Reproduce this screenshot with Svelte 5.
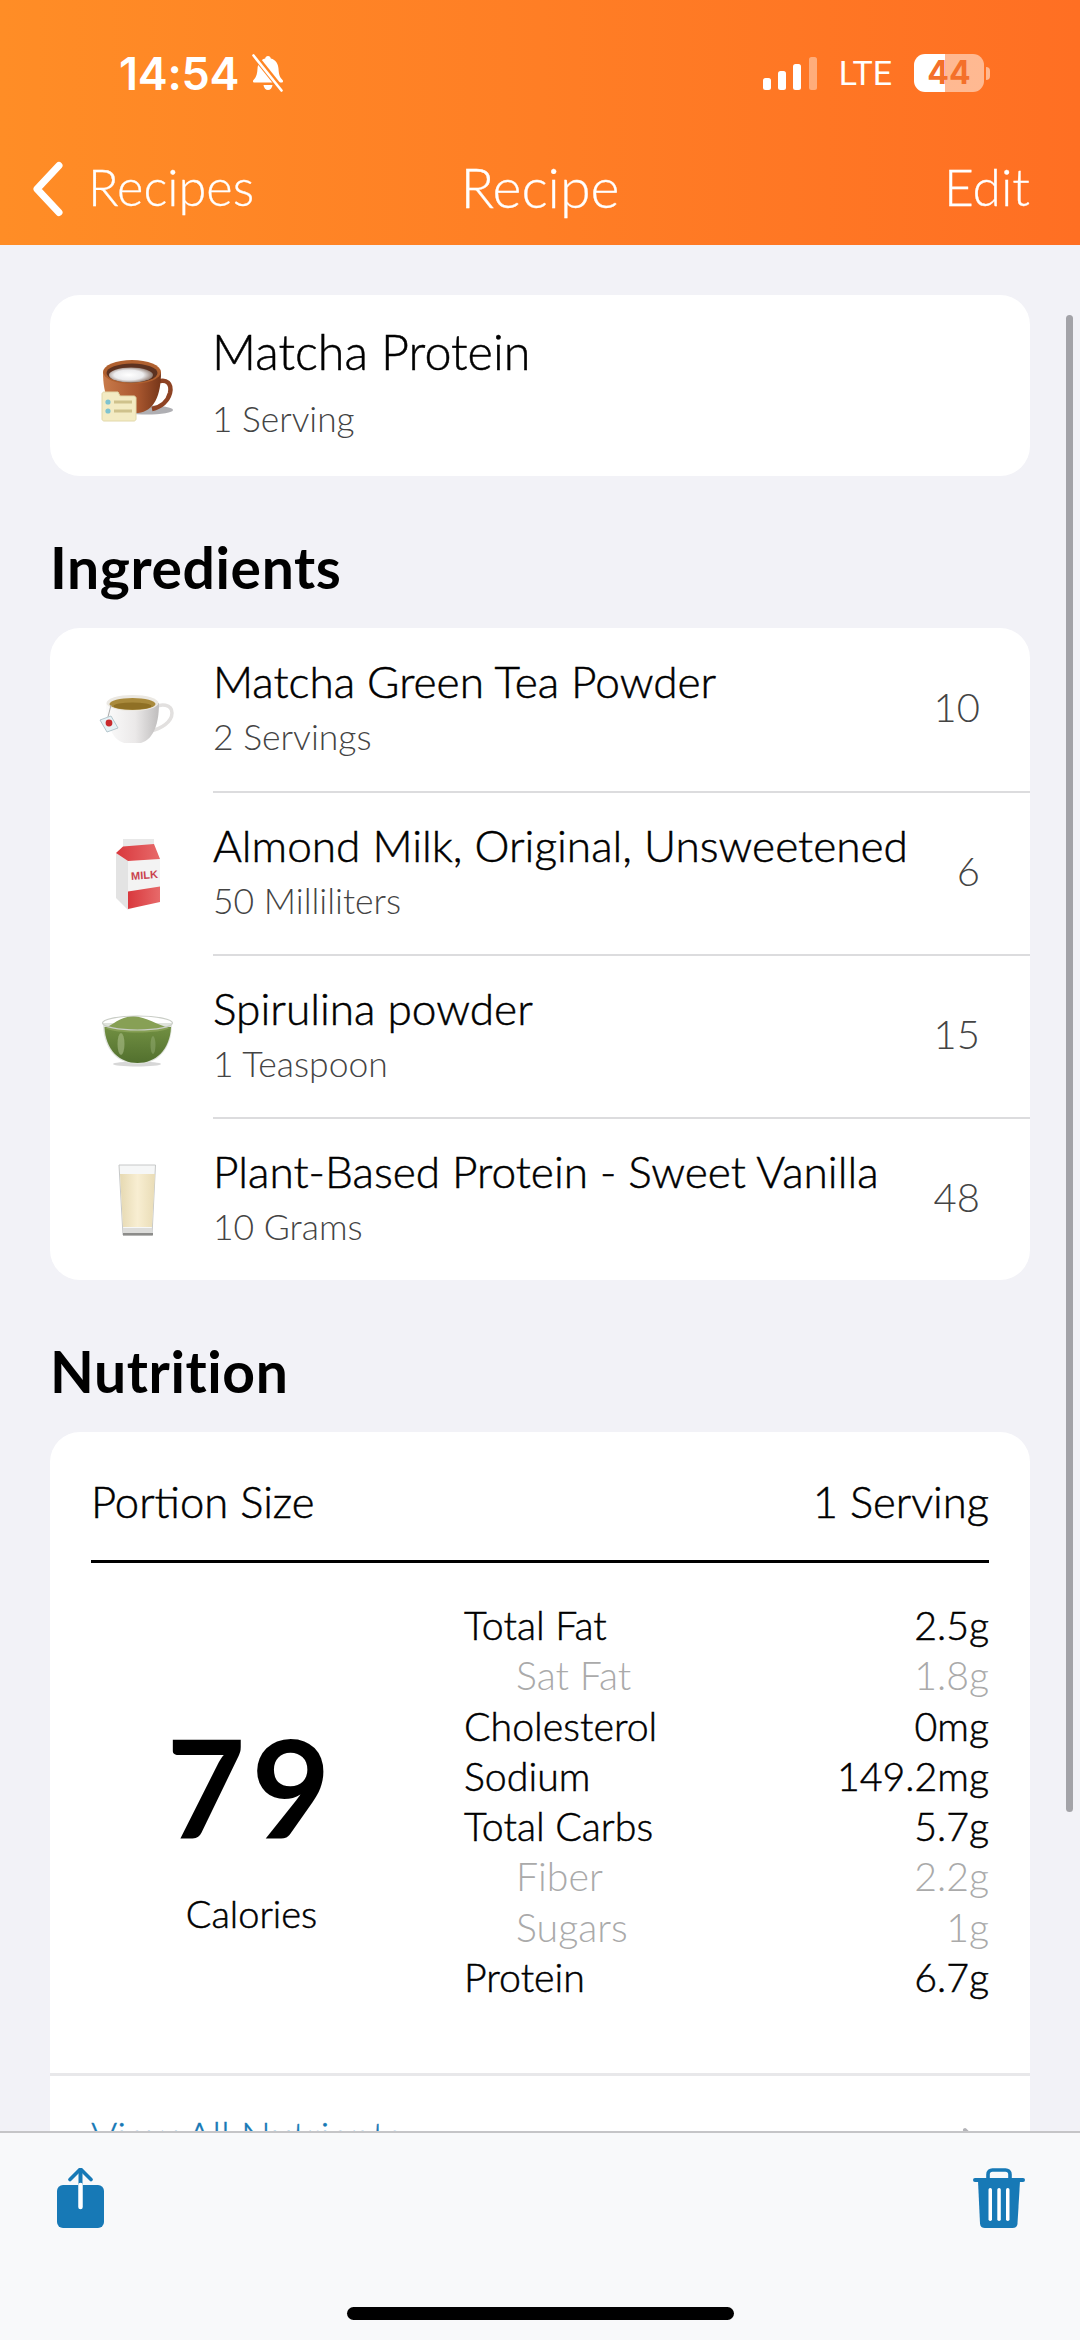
<script>
  const ingredients = [
    { icon: 'tea', name: 'Matcha Green Tea Powder', sub: '2 Servings', value: '10' },
    { icon: 'milk', name: 'Almond Milk, Original, Unsweetened', sub: '50 Milliliters', value: '6' },
    { icon: 'bowl', name: 'Spirulina powder', sub: '1 Teaspoon', value: '15' },
    { icon: 'glass', name: 'Plant-Based Protein - Sweet Vanilla', sub: '10 Grams', value: '48' }
  ];
  const nutrients = [
    { label: 'Total Fat', value: '2.5g' },
    { label: 'Sat Fat', value: '1.8g', minor: true },
    { label: 'Cholesterol', value: '0mg' },
    { label: 'Sodium', value: '149.2mg' },
    { label: 'Total Carbs', value: '5.7g' },
    { label: 'Fiber', value: '2.2g', minor: true },
    { label: 'Sugars', value: '1g', minor: true },
    { label: 'Protein', value: '6.7g' }
  ];
</script>

<div class="phone">
  <header class="header">
    <div class="status">
      <div class="status-left">
        <span class="time">14:54</span>
        <svg class="bell" viewBox="0 0 36 38" width="36" height="38">
          <path d="M18 2c1.600 0 2.600 1 2.800 2.400 5 1.300 7.400 5.200 7.700 10.400.3 5 1 8.400 4 11.200 1 1 .5 2.600-1 2.600H4.500c-1.500 0-2-1.600-1-2.600 3-2.800 3.700-6.200 4-11.200.3-5.200 2.700-9.100 7.700-10.400C15.400 3 16.400 2 18 2z" fill="#fff"/>
          <path d="M13.500 31h9c-.4 3-2.200 5-4.500 5s-4.100-2-4.500-5z" fill="#fff"/>
          <path d="M4 1l28 35" stroke="#ff8524" stroke-width="6"/>
          <path d="M3.500 1.500l28 35" stroke="#fff" stroke-width="2.600" stroke-linecap="round"/>
        </svg>
      </div>
      <div class="status-right">
        <svg class="signal" viewBox="0 0 54 33" width="54" height="33">
          <rect x="0" y="21" width="8" height="12" rx="2.500" fill="#fff"/>
          <rect x="15" y="14" width="8" height="19" rx="2.500" fill="#fff"/>
          <rect x="30" y="7" width="8" height="26" rx="2.500" fill="#fff"/>
          <rect x="46" y="0" width="8" height="33" rx="2.500" fill="#fff" fill-opacity=".4"/>
        </svg>
        <span class="lte">LTE</span>
        <div class="battery-wrap">
          <div class="battery"><span>44</span></div>
          <span class="nub"></span>
        </div>
      </div>
    </div>
    <nav class="nav">
      <div class="nav-back">
        <svg viewBox="0 0 34 56" width="34" height="56">
          <path d="M28 4.500L6 28l22 23.500" fill="none" stroke="#fff" stroke-width="7" stroke-linecap="round" stroke-linejoin="round"/>
        </svg>
        <span>Recipes</span>
      </div>
      <span class="nav-title">Recipe</span>
      <span class="nav-edit">Edit</span>
    </nav>
  </header>

  <main class="content">
    <section class="card summary">
      <div class="icon">{@render foodIcon('recipe')}</div>
      <div class="summary-text">
        <div class="summary-title">Matcha Protein</div>
        <div class="summary-sub">1 Serving</div>
      </div>
    </section>

    <h2 class="section first">Ingredients</h2>
    <section class="card">
      {#each ingredients as item, i}
        <div class="row">
          <div class="icon">{@render foodIcon(item.icon)}</div>
          <div class="row-body" class:ruled={i > 0}>
            <div class="row-text">
              <div class="row-name">{item.name}</div>
              <div class="row-sub">{item.sub}</div>
            </div>
            <div class="row-value">{item.value}</div>
          </div>
        </div>
      {/each}
    </section>

    <h2 class="section">Nutrition</h2>
    <section class="card nutrition">
      <div class="portion">
        <span>Portion Size</span>
        <span>1 Serving</span>
      </div>
      <div class="facts">
        <div class="calories">
          <div class="cal-num">79</div>
          <div class="cal-label">Calories</div>
        </div>
        <div class="table">
          {#each nutrients as n}
            <div class="t-row" class:minor={n.minor}>
              <span>{n.label}</span>
              <span>{n.value}</span>
            </div>
          {/each}
        </div>
      </div>
      <div class="view-all">
        <span>View All Nutrients</span>
        <svg viewBox="0 0 18 30" width="18" height="30">
          <path d="M3 3l11 12L3 27" fill="none" stroke="#b4b4b8" stroke-width="4" stroke-linecap="round" stroke-linejoin="round"/>
        </svg>
      </div>
    </section>

    <div class="scrollbar"></div>
  </main>

  <footer class="toolbar">
    <div class="tools">
      <svg viewBox="0 0 48 62" width="48" height="62">
        <rect x="0" y="17" width="47" height="43" rx="6" fill="#1779b6"/>
        <path d="M23.500 1v17" stroke="#1779b6" stroke-width="4"/>
        <path d="M23.500 17v22" stroke="#fff" stroke-width="4.500" stroke-linecap="round"/>
        <path d="M13 11.500L23.500 1 34 11.500" fill="none" stroke="#1779b6" stroke-width="3.600" stroke-linecap="round" stroke-linejoin="round"/>
      </svg>
      <svg viewBox="0 0 52 62" width="52" height="62">
        <path d="M15 12V6.500C15 3.500 17 2 19.500 2h13C35 2 37 3.500 37 6.500V12" fill="none" stroke="#1779b6" stroke-width="3.600"/>
        <rect x="0" y="10" width="52" height="4" rx="2" fill="#1779b6"/>
        <path d="M5 13h42l-2.500 42.500c-.2 3-2 4.500-5 4.500h-27.500c-3 0-4.800-1.500-5-4.500z" fill="#1779b6"/>
        <rect x="15.500" y="20" width="3.500" height="33" rx="1.700" fill="#fff"/>
        <rect x="24.300" y="20" width="3.500" height="33" rx="1.700" fill="#fff"/>
        <rect x="33" y="20" width="3.500" height="33" rx="1.700" fill="#fff"/>
      </svg>
    </div>
    <div class="home"></div>
  </footer>
</div>

{#snippet foodIcon(kind)}
  <svg viewBox="0 0 100 100" width="100" height="100">
    <defs>
      <linearGradient id="g-brown" x1="0" x2="1" y1="0" y2="0">
        <stop offset="0" stop-color="#c87a4a"/><stop offset=".6" stop-color="#a9572f"/><stop offset="1" stop-color="#763619"/>
      </linearGradient>
      <linearGradient id="g-white" x1="0" x2="1" y1="0" y2="0">
        <stop offset="0" stop-color="#fbfbfb"/><stop offset=".55" stop-color="#ebe9e9"/><stop offset="1" stop-color="#bfbdbd"/>
      </linearGradient>
      <linearGradient id="g-red" x1="0" x2="1" y1="0" y2="0">
        <stop offset="0" stop-color="#d9383d"/><stop offset="1" stop-color="#e76a6a"/>
      </linearGradient>
      <linearGradient id="g-green" x1="0" x2="0" y1="0" y2="1">
        <stop offset="0" stop-color="#718f42"/><stop offset="1" stop-color="#52702e"/>
      </linearGradient>
      <linearGradient id="g-milkshake" x1="0" x2="1" y1="0" y2="0">
        <stop offset="0" stop-color="#e6d9b2"/><stop offset=".5" stop-color="#f8eed2"/><stop offset="1" stop-color="#e9dcb6"/>
      </linearGradient>
      <radialGradient id="g-foam" cx=".45" cy=".5" r=".55">
        <stop offset="0" stop-color="#fff"/><stop offset=".6" stop-color="#ececee"/><stop offset="1" stop-color="#8f7a70"/>
      </radialGradient>
    </defs>
    {#if kind === 'recipe'}
      <ellipse cx="60" cy="74" rx="26" ry="4.500" fill="#7a7a80" fill-opacity=".6"/>
      <path d="M70 46c10-4 15 2 13 11-2 8-9 14-18 16" fill="none" stroke="#8e4324" stroke-width="4.500"/>
      <path d="M16 36c0 24 7 39 23 41h12c16-2 23-17 23-41z" fill="url(#g-brown)"/>
      <ellipse cx="45" cy="36" rx="29" ry="12" fill="#b0602f"/>
      <ellipse cx="45" cy="37" rx="25.500" ry="9.500" fill="#5d3220"/>
      <ellipse cx="44" cy="39" rx="22" ry="7.500" fill="url(#g-foam)"/>
      <path d="M15 58c0-1 1-2 2-2h14l2 4h14c1 0 2 1 2 2v21c0 1-1 2-2 2H17c-1 0-2-1-2-2z" fill="#f3ebc3" stroke="#e2d8a9"/>
      <circle cx="21" cy="66" r="2.600" fill="#7fc3cf"/>
      <circle cx="21" cy="75" r="2.600" fill="#7fc3cf"/>
      <rect x="27" y="64.500" width="18" height="3" fill="#cfc28c"/>
      <rect x="27" y="73.500" width="18" height="3" fill="#cfc28c"/>
    {:else if kind === 'tea'}
      <path d="M66 48c8-5 19-4 19 5 0 9-11 16-22 18" fill="none" stroke="#e2e0df" stroke-width="3.500"/>
      <path d="M19 43c0 20 5 36 18 40h17c13-4 18-20 18-40z" fill="url(#g-white)"/>
      <ellipse cx="45.500" cy="43" rx="26" ry="8" fill="#ebe8e2"/>
      <ellipse cx="45.500" cy="44" rx="23" ry="6" fill="#a98a3c"/>
      <ellipse cx="45.500" cy="46" rx="19" ry="3.500" fill="#8f7025"/>
      <path d="M24 45l-3 12" stroke="#aaa" stroke-width="1"/>
      <path d="M13 60l11-4 7 12-11 4z" fill="#e6f2f6" stroke="#b4c6cd" stroke-width="1"/>
      <circle cx="22" cy="63" r="3.400" fill="#c92b2e"/>
    {:else if kind === 'milk'}
      <path d="M36 16h31v6l-31 3z" fill="#e8e8e8"/>
      <path d="M29 30l12 8v49L29 75z" fill="#e3e3e3"/>
      <path d="M41 38l32-2v39L41 87z" fill="#f3f3f3"/>
      <path d="M29 30l7-6.500L67 21l6 15-32 2z" fill="url(#g-red)"/>
      <path d="M41 68.500l32-5V79L41 86z" fill="url(#g-red)"/>
      <text x="44" y="56" class="milk-label" transform="rotate(-4 57 52)">MILK</text>
    {:else if kind === 'bowl'}
      <ellipse cx="50" cy="78" rx="24" ry="2.500" fill="#bcbcbc" fill-opacity=".6"/>
      <path d="M16 37c0 26 14 41 34.500 41S85 63 85 37z" fill="#dfe3dc"/>
      <path d="M17.500 41c1 23 15 36 33 36S83 64 84 41z" fill="url(#g-green)"/>
      <path d="M18 42c8-3 14-11 28-12 14 1 24 9 37 12-10 6-55 6-65 0z" fill="#87a055"/>
      <ellipse cx="34" cy="58" rx="3.500" ry="11" fill="#b9c99a" fill-opacity=".5"/>
      <ellipse cx="66" cy="59" rx="2.500" ry="9" fill="#a3b884" fill-opacity=".4"/>
      <ellipse cx="50.500" cy="37" rx="35" ry="7" fill="none" stroke="#c9cdc6" stroke-width="1.200"/>
    {:else if kind === 'glass'}
      <path d="M32 16h36.500L65 86H36z" fill="#f6f7f7" stroke="#c6c8c8" stroke-width="1"/>
      <path d="M33 25h35l-3 53H36z" fill="url(#g-milkshake)"/>
      <path d="M36 79h29l.4 7H36z" fill="#dcdcda"/>
      <path d="M36 84h30v2.500H36z" fill="#8c8c8a"/>
    {/if}
  </svg>
{/snippet}

<style>
  :global(body) { margin: 0; background: #f2f2f7; }
  .phone {
    width: 1080px; height: 2340px; display: flex; flex-direction: column;
    overflow: hidden; background: #f2f2f7; color: #000;
    font-family: "Lato", "Noto Sans", sans-serif;
  }
  .header {
    flex: none; height: 245px; color: #fff;
    background: linear-gradient(90deg, #ff8d26 0%, #ff7e25 50%, #ff6f23 100%);
  }
  .status {
    height: 146px; box-sizing: border-box; padding: 0 90px 0 119px;
    display: flex; align-items: center; justify-content: space-between;
  }
  .status-left { display: flex; align-items: center; gap: 11px; }
  .time { font: 600 45px/1 "Inter", sans-serif; letter-spacing: -0.3px; }
  .status-right { display: flex; align-items: center; }
  .signal { margin-right: 22px; }
  .lte { font: 400 34px/1 "Roboto", sans-serif; margin-right: 22px; }
  .battery-wrap { display: flex; align-items: center; gap: 2px; }
  .battery {
    width: 70px; height: 38px; border-radius: 11px;
    background: linear-gradient(90deg, #fff 44%, rgba(255,255,255,.5) 44%);
    display: flex; align-items: center; justify-content: center;
    color: #f4702a; font: 700 32px/1 "Inter", sans-serif;
  }
  .nub { width: 4px; height: 13px; border-radius: 0 4px 4px 0; background: rgba(255,255,255,.5); }
  .nav {
    height: 99px; box-sizing: border-box; padding: 0 50px 19px 33px;
    display: flex; align-items: center; justify-content: space-between; position: relative;
    font-weight: 300; -webkit-text-stroke: .3px #fff;
  }
  .nav-back { display: flex; align-items: center; gap: 23px; font-size: 50.500px; }
  .nav-back svg { margin-top: 5px; margin-left: -2px; }
  .nav-title { font-size: 55.500px; position: absolute; left: 0; right: 0; text-align: center; }
  .nav-edit { font-size: 51.500px; }

  .content {
    flex: 1; min-height: 0; overflow: hidden; padding: 50px 50px 0; position: relative;
    font-weight: 300; -webkit-text-stroke: .5px #000;
  }
  .card { background: #fff; border-radius: 30px; overflow: hidden; }
  .icon { flex: none; width: 100px; height: 100px; }
  .icon svg { display: block; }
  .summary { height: 181px; display: flex; align-items: center; padding-left: 37px; }
  .summary-text { margin-left: 25px; }
  .summary-title { font-size: 48.500px; line-height: 65px; margin: -2px 0 2px; }
  .summary-sub { font-size: 35.300px; line-height: 65px; color: #444; -webkit-text-stroke: 0; }

  .section {
    margin: 0; font-size: 57px; line-height: 72px; font-weight: 700; height: 72px;
    letter-spacing: .6px; padding: 55px 0 25px; box-sizing: content-box; -webkit-text-stroke: 0;
  }

  .row { height: 163px; display: flex; align-items: center; padding-left: 37px; }
  .row-body {
    flex: 1; height: 100%; margin-left: 26px; box-sizing: border-box; display: flex;
    align-items: center; justify-content: space-between; padding-right: 50px;
  }
  .row-body.ruled { border-top: 2px solid #dcdcde; }
  .row-text { padding-top: 1px; }
  .row-name { font-size: 44.200px; line-height: 54px; margin: -2px 0 2px; }
  .row-sub { font-size: 35.500px; line-height: 54px; color: #444; -webkit-text-stroke: 0; }
  .row-value { font-size: 40px; color: #444; -webkit-text-stroke: 0; margin-top: -6px; }

  .portion {
    margin: 0 41px; height: 119px; padding-top: 9px; border-bottom: 3px solid #000;
    display: flex; justify-content: space-between; align-items: center; font-size: 43.600px;
  }
  .facts { display: flex; padding: 0 41px; height: 510px; }
  .calories { width: 373px; flex: none; text-align: center; padding: 158px 52px 0 0; box-sizing: border-box; }
  .cal-num { font-size: 136px; line-height: 130px; font-weight: 700; letter-spacing: 6px; -webkit-text-stroke: 0; }
  .cal-label { font-size: 38px; line-height: 50px; margin-top: 37px; }
  .table { flex: 1; padding-top: 37px; }
  .t-row { height: 50.300px; line-height: 50px; font-size: 39.300px; display: flex; justify-content: space-between; }
  .t-row.minor { color: #aaa; -webkit-text-stroke: 0; }
  .t-row.minor span:first-child { padding-left: 52px; }
  .view-all {
    border-top: 3px solid #e8e8ea; height: 120px; box-sizing: content-box; padding: 0 50px 0 41px;
    display: flex; align-items: center; justify-content: space-between;
    color: #1779b6; font-size: 40px; -webkit-text-stroke: .3px #1779b6;
  }
  .view-all svg { margin-top: 12px; }
  .scrollbar {
    position: absolute; right: 7px; top: 70px; width: 7px; height: 1497px;
    border-radius: 4px; background: #a3a3a8; -webkit-text-stroke: 0;
  }

  .toolbar {
    flex: none; height: 209px; box-sizing: border-box; background: #f8f9fa;
    border-top: 2px solid #c5c5c7; position: relative; z-index: 1;
  }
  .tools { display: flex; justify-content: space-between; padding: 35px 55px 0 57px; }
  .home {
    position: absolute; left: 347px; bottom: 20px; width: 387px; height: 13px;
    border-radius: 7px; background: #000;
  }
  .milk-label { font: 700 11px "Liberation Sans", sans-serif; fill: #c9434f; -webkit-text-stroke: 0; }
</style>
